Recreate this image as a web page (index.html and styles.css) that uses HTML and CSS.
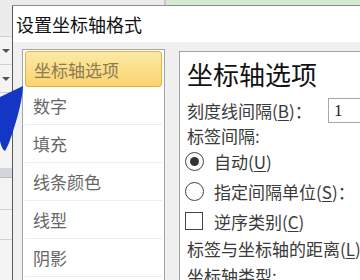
FILE: index.html
```html
<!DOCTYPE html>
<html lang="zh-CN">
<head>
    <meta charset="UTF-8">
    <meta name="viewport" content="width=device-width, initial-scale=1.0">
    <title>设置坐标轴格式</title>
    <link rel="stylesheet" href="styles.css">
</head>
<body>
    <div class="screen">
        <div class="sheet">
            <div class="cell c1"></div>
            <div class="cell c2"><span class="drop"></span></div>
            <div class="cell c3"><span class="drop"></span></div>
            <div class="cell c4"></div>
            <div class="cell band"></div>
            <div class="cell c5"></div>
            <div class="cell c6"></div>
            <div class="cell c7"></div>
        </div>

        <div class="window">
            <div class="behind">
                <div class="behind-gray"></div>
                <div class="behind-green"></div>
            </div>
            <div class="dialog">
                <div class="titlebar">设置坐标轴格式</div>
                <div class="dialog-body">
                    <ul class="nav">
                        <li class="nav-item active">坐标轴选项</li>
                        <li class="nav-item">数字</li>
                        <li class="nav-item">填充</li>
                        <li class="nav-item">线条颜色</li>
                        <li class="nav-item">线型</li>
                        <li class="nav-item">阴影</li>
                    </ul>

                    <div class="panel">
                        <h2 class="panel-title">坐标轴选项</h2>
                        <div class="row r1">
                            <span class="label">刻度线间隔(<u>B</u>)：</span>
                            <span class="field">1</span>
                        </div>
                        <div class="row r2">标签间隔:</div>
                        <div class="row r3"><span class="radio checked"></span>自动(<u>U</u>)</div>
                        <div class="row r4"><span class="radio"></span>指定间隔单位(<u>S</u>)：</div>
                        <div class="row r5"><span class="check"></span>逆序类别(<u>C</u>)</div>
                        <div class="row r6">标签与坐标轴的距离(<u>L</u>)：</div>
                        <div class="row r7">坐标轴类型:</div>
                    </div>
                </div>
            </div>
        </div>

        <!-- pen mark drawn over the screenshot -->
        <svg class="pen" width="30" height="160" viewBox="0 0 30 160">
            <path d="M0 97 L23 86 C22 100 19 112 14 128 C11 138 8 146 5 151 C3 150 1 146 0 141 Z" fill="#1336c4"/>
        </svg>
    </div>
</body>
</html>
```

FILE: styles.css
```css
* { box-sizing: border-box; }
body { margin: 0; font-family: "Noto Sans CJK SC", "Microsoft YaHei", sans-serif; }
.screen { position: relative; width: 360px; height: 280px; overflow: hidden; display: flex; background: #f2f2f2; }

/* excel sheet peeking out on the left */
.sheet { width: 12px; flex: none; display: flex; flex-direction: column; background: #f4f4f4; }
.cell { flex: none; border-bottom: 1px solid #cfcfcf; display: flex; align-items: center; justify-content: center; }
.c1 { height: 37px; background: #ececec; }
.c2 { height: 28px; }
.c3 { height: 28px; }
.c4 { height: 75px; border-bottom: none; }
.band { height: 10px; background: #d3d7dd; border-bottom: 1px solid #b8bcc4; }
.c5 { height: 32px; }
.c6 { height: 30px; }
.c7 { flex: 1; border-bottom: none; }
.drop { width: 0; height: 0; border-left: 4px solid transparent; border-right: 4px solid transparent; border-top: 4px solid #555; }

.window { flex: 1; display: flex; flex-direction: column; min-width: 0; min-height: 0; }
.behind { flex: none; height: 6px; display: flex; border-bottom: 1px solid #8c8c8c; }
.behind-gray { width: 154px; background: #ececec; border-right: 2px solid #c8c8c8; }
.behind-green { flex: 1; background: #d6ead0; }

.dialog { flex: 1; min-height: 0; display: flex; flex-direction: column; border-left: 1px solid #5a5a5a; background: #f0f0f0; }
.titlebar { flex: none; height: 36px; background: #fff; font-size: 18px; line-height: 36px; padding-left: 3px; color: #111; }

.dialog-body { flex: 1; min-height: 0; overflow: hidden; display: flex; align-items: flex-start; padding: 7px 0 0 9px; }

.nav { list-style: none; margin: 0; padding: 1px; width: 143px; height: 240px; flex: none; background: #fff; border: 1px solid #a3a3a3; border-bottom: none; }
.nav-item { height: 38px; padding-left: 8px; display: flex; align-items: center; font-size: 17px; color: #666; border-bottom: 1px solid #ececec; margin: 0 1px; }
.nav-item.active { height: 36px; border: 1px solid #e2b24a; border-radius: 3px; background: linear-gradient(#fde9a4, #fbd471); color: #8c7c55; }

.panel { flex: 1; height: 240px; margin: 2px 0 0 14px; background: #fff; border: 1px solid #a0a0a0; border-right: none; border-bottom: none; padding-left: 7px; color: #3a3a3a; font-size: 17px; white-space: nowrap; overflow: hidden; }
.panel-title { margin: 6px 0 0; font-size: 26px; font-weight: normal; line-height: 32px; color: #111; }
.row { display: flex; align-items: center; }
.row u { text-underline-offset: 2px; }
.r1 { height: 26px; margin-top: 7px; }
.r2 { height: 24px; }
.r3 { height: 28px; }
.r4 { height: 32px; }
.r5 { height: 28px; }
.r6 { height: 26px; }
.r7 { height: 28px; }

.label { flex: 0 0 141px; }
.field { flex: none; width: 44px; height: 25px; border: 1px solid #a8a8a8; padding-left: 5px; line-height: 23px; font-family: "Liberation Serif", serif; font-size: 17px; color: #222; }

.radio { width: 19px; height: 19px; border: 1px solid #444; border-radius: 50%; margin: 0 10px 0 -2px; display: flex; align-items: center; justify-content: center; flex: none; }
.radio.checked::after { content: ""; width: 9px; height: 9px; border-radius: 50%; background: #333; }
.check { width: 18px; height: 18px; border: 1px solid #444; margin: 0 11px 0 -2px; flex: none; }

.pen { position: absolute; left: 0; top: 0; }
```
